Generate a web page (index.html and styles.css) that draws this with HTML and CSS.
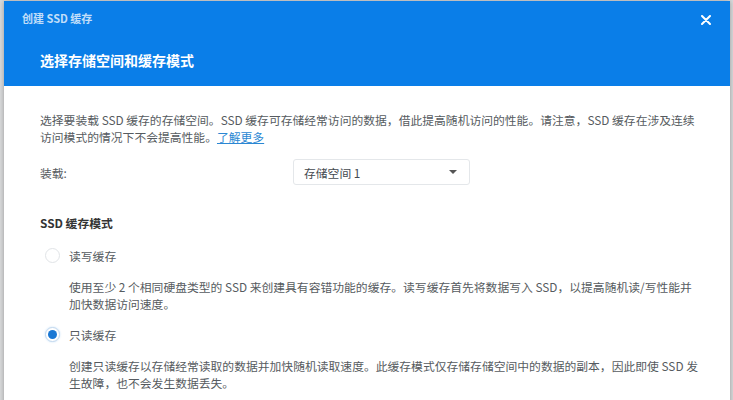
FILE: index.html
```html
<!DOCTYPE html>
<html lang="zh-CN">
<head>
<meta charset="utf-8">
<title>创建 SSD 缓存</title>
<link rel="stylesheet" href="styles.css">
</head>
<body>
<div class="dialog">
  <div class="header">
    <div class="title-row">
      <span class="title">创建 SSD 缓存</span>
      <span class="close" aria-label="关闭">
        <svg width="10" height="10" viewBox="0 0 10 10"><path d="M1 1 L9 9 M9 1 L1 9" stroke="#fff" stroke-width="2" stroke-linecap="round" fill="none"/></svg>
      </span>
    </div>
    <div class="subtitle">选择存储空间和缓存模式</div>
  </div>
  <div class="content">
    <p class="intro">选择要装载 SSD 缓存的存储空间。SSD 缓存可存储经常访问的数据，借此提高随机访问的性能。请注意，SSD 缓存在涉及连续<br>访问模式的情况下不会提高性能。<a class="link" href="#">了解更多</a></p>
    <div class="field">
      <span class="field-label">装载:</span>
      <div class="select">
        <span>存储空间 1</span>
        <span class="caret"></span>
      </div>
    </div>
    <div class="section-title">SSD 缓存模式</div>
    <div class="radio-row">
      <span class="radio"></span>
      <span class="radio-label">读写缓存</span>
    </div>
    <p class="desc">使用至少 2 个相同硬盘类型的 SSD 来创建具有容错功能的缓存。读写缓存首先将数据写入 SSD，以提高随机读/写性能并<br>加快数据访问速度。</p>
    <div class="radio-row">
      <span class="radio checked"></span>
      <span class="radio-label">只读缓存</span>
    </div>
    <p class="desc">创建只读缓存以存储经常读取的数据并加快随机读取速度。此缓存模式仅存储存储空间中的数据的副本，因此即使 SSD 发<br>生故障，也不会发生数据丢失。</p>
  </div>
</div>
</body>
</html>
```
FILE: styles.css
```css
html, body {
  margin: 0;
  padding: 0;
  height: 100%;
  overflow: hidden;
}
body {
  background: #d9dadb;
  font-family: "Noto Sans CJK SC", "Noto Sans", sans-serif;
  font-size: 11.8px;
  color: #565b60;
}
.dialog {
  margin: 1px 0 0 4px;
  width: 726px;
  height: 420px;
  background: #fff;
  box-shadow: 0 0 5px rgba(0, 0, 0, 0.3);
}
.header {
  background: #0a7ee8;
  padding: 9px 19px 16px 18px;
  color: #fff;
}
.title-row {
  display: flex;
  justify-content: space-between;
  align-items: center;
  height: 17px;
}
.title {
  font-size: 11px;
  line-height: 17px;
  font-weight: 700;
  color: rgba(255, 255, 255, 0.75);
}
.close {
  display: flex;
  width: 10px;
  height: 10px;
  margin-top: 2px;
}
.subtitle {
  margin-top: 23px;
  padding-left: 18px;
  font-size: 14px;
  line-height: 20px;
  font-weight: 700;
  color: #fff;
}
.content {
  padding: 25px 20px 0 36px;
}
.intro {
  margin: 0;
  line-height: 17px;
}
.link {
  color: #2b87d3;
  text-decoration: underline;
}
.field {
  display: grid;
  grid-template-columns: 253px 177px;
  align-items: center;
  margin-top: 14px;
}
.field-label {
  line-height: 17px;
}
.select {
  height: 24px;
  border: 1px solid #e4e7ea;
  border-radius: 3px;
  display: flex;
  align-items: center;
  justify-content: space-between;
  padding: 0 10px 0 10px;
  color: #444a50;
}
.caret {
  width: 0;
  height: 0;
  border-left: 4px solid transparent;
  border-right: 4px solid transparent;
  border-top: 4px solid #555;
  margin-right: 2px;
}
.section-title {
  margin-top: 29px;
  font-weight: 700;
  color: #333;
  line-height: 17px;
}
.radio-row {
  display: flex;
  align-items: center;
  gap: 9px;
  margin-top: 16px;
  height: 17px;
  padding-left: 5px;
}
.radio {
  box-sizing: border-box;
  width: 15px;
  height: 15px;
  border-radius: 50%;
  border: 1px solid #e1e4e7;
  background: #fff;
  display: flex;
  align-items: center;
  justify-content: center;
}
.radio.checked {
  border-color: #c5d9ee;
  box-shadow: 0 0 2px rgba(10, 126, 232, 0.25);
}
.radio.checked::after {
  content: "";
  width: 9px;
  height: 9px;
  border-radius: 50%;
  background: #1a78d4;
}
.radio-label {
  line-height: 17px;
}
.desc {
  margin: 14px 0 0 29px;
  line-height: 17px;
}
.desc + .radio-row {
  margin-top: 14px;
}
```
